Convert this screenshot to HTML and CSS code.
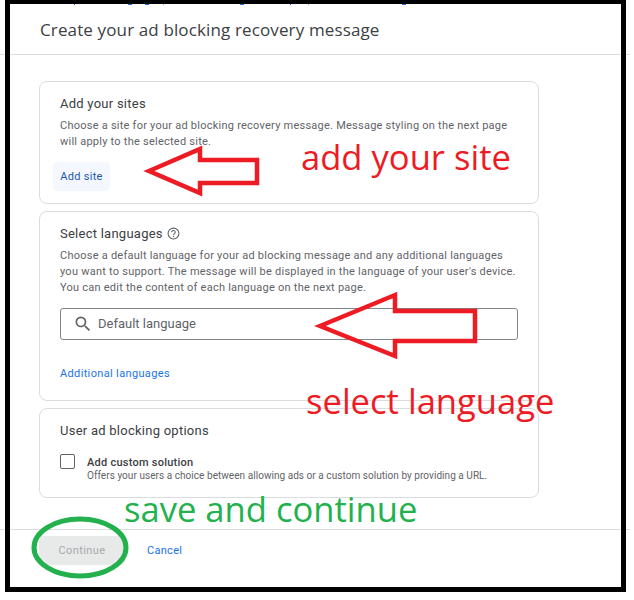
FILE: index.html
```html
<!DOCTYPE html>
<html lang="en">
<head>
    <meta charset="UTF-8">
    <meta name="viewport" content="width=device-width, initial-scale=1.0">
    <title>Create your ad blocking recovery message</title>
    <link rel="stylesheet" href="styles.css">
</head>
<body>
    <div class="page">
        <header class="dialog-head">
            <h1>Create your ad blocking recovery message</h1>
        </header>
        <main class="dialog-body">
            <section class="card card-sites">
                <h2>Add your sites</h2>
                <p>Choose a site for your ad blocking recovery message. Message styling on the next page<br>will apply to the selected site.</p>
                <button class="add-site">Add site</button>
            </section>
            <section class="card card-langs">
                <h2>Select languages
                    <svg class="help" width="13" height="13" viewBox="0 0 24 24" fill="none" stroke="#5f6368" stroke-width="2">
                        <circle cx="12" cy="12" r="10"/>
                        <path d="M8.8 9.6a3.2 3.2 0 1 1 5 2.6c-1.1.8-1.8 1.4-1.8 2.8"/>
                        <path d="M12 16.6v2"/>
                    </svg>
                </h2>
                <p>Choose a default language for your ad blocking message and any additional languages<br>you want to support. The message will be displayed in the language of your user's device.<br>You can edit the content of each language on the next page.</p>
                <div class="search">
                    <svg width="20" height="20" viewBox="0 0 24 24" fill="#5f6368">
                        <path d="M15.5 14h-.79l-.28-.27A6.47 6.47 0 0 0 16 9.5 6.5 6.5 0 1 0 9.5 16c1.61 0 3.09-.59 4.23-1.57l.27.28v.79l5 4.99L20.49 19l-4.99-5zm-6 0C7.01 14 5 11.99 5 9.5S7.01 5 9.5 5 14 7.01 14 9.5 11.99 14 9.5 14z"/>
                    </svg>
                    <span>Default language</span>
                </div>
                <a class="more-langs" href="#">Additional languages</a>
            </section>
            <section class="card card-options">
                <h2>User ad blocking options</h2>
                <div class="option">
                    <span class="checkbox"></span>
                    <div class="option-text">
                        <div class="option-name">Add custom solution</div>
                        <div class="option-note">Offers your users a choice between allowing ads or a custom solution by providing a URL.</div>
                    </div>
                </div>
            </section>
        </main>
        <footer class="dialog-foot">
            <button class="continue" disabled>Continue</button>
            <a class="cancel" href="#">Cancel</a>
        </footer>
    </div>

    <!-- hand drawn notes on top of the screenshot -->
    <div class="shot-frame"></div>
    <svg class="marks" width="634" height="600" viewBox="0 0 634 600" fill="none" stroke-width="4.5">
        <!-- bits of the link row cut off by the frame -->
        <path stroke="#1a73e8" stroke-width="1" d="M74 4.5h1M128 4.5h4M145 4.5h4M240 4.5h4M290 4.5h1M402 4.5h4"/>
        <path stroke="#9aa0a6" stroke-width="1" d="M163 4.5h1M308 4.5h1"/>
        <path stroke="#ed1c24" d="M149 171 200 149V160H257V183H200V193Z"/>
        <path stroke="#ed1c24" d="M320 326 395 295V311H475V341H395V356Z"/>
        <ellipse stroke="#22b14c" stroke-width="5" cx="80" cy="547.5" rx="46" ry="28.5"/>
    </svg>
    <div class="note note-site">add your site</div>
    <div class="note note-lang">select language</div>
    <div class="note note-save">save and continue</div>
</body>
</html>
```

FILE: styles.css
```css
* {
    margin: 0;
    padding: 0;
    box-sizing: border-box;
}
body {
    background-color: #fff;
    font-family: Roboto, "Liberation Sans", sans-serif;
    color: #5f6368;
}
.page {
    width: 630px;
    height: 592px;
    display: flex;
    flex-direction: column;
}
.dialog-head {
    height: 55px;
    padding: 18px 0 0 40px;
    border-bottom: 1px solid #dadce0;
}
.dialog-head h1 {
    font-family: "Open Sans", sans-serif;
    font-size: 17px;
    line-height: 24px;
    font-weight: 400;
    letter-spacing: 0.13px;
    color: #3c4043;
}
.dialog-body {
    height: 474px;
    padding: 26px 0 0 39px;
    display: flex;
    flex-direction: column;
    gap: 7px;
}
.card {
    width: 500px;
    padding: 14px 20px 0;
    border: 1px solid #dadce0;
    border-radius: 8px;
}
.card-sites {
    height: 123px;
}
.card-langs {
    height: 190px;
}
.card-options {
    height: 90px;
}
.card h2 {
    font-size: 13px;
    line-height: 15px;
    font-weight: 400;
    letter-spacing: 0.25px;
    color: #3c4043;
    display: flex;
    align-items: center;
    gap: 4px;
}
.card p {
    margin-top: 7px;
    font-size: 11px;
    line-height: 16px;
    letter-spacing: 0.24px;
}
.add-site {
    display: block;
    margin: 12px 0 0 -7px;
    width: 57px;
    height: 29px;
    font-family: inherit;
    font-size: 11px;
    letter-spacing: 0.3px;
    font-weight: 400;
    color: #1a56b0;
    background-color: #f4f8fe;
    border: none;
    border-radius: 4px;
}
.search {
    margin-top: 12px;
    height: 32px;
    padding: 0 0 1px 12px;
    display: flex;
    align-items: center;
    gap: 5px;
    font-size: 13px;
    border: 1px solid #80868b;
    border-radius: 3px;
}
.more-langs {
    display: block;
    margin-top: 27px;
    font-size: 11px;
    line-height: 14px;
    letter-spacing: 0.35px;
    font-weight: 400;
    color: #1a73e8;
    text-decoration: none;
}
.option {
    margin-top: 16px;
    display: flex;
    gap: 12px;
}
.checkbox {
    width: 15px;
    height: 15px;
    border: 1.5px solid #5f6368;
    border-radius: 2px;
}
.option-text {
    padding-top: 2px;
}
.option-name {
    font-size: 11px;
    line-height: 13px;
    font-weight: 500;
    letter-spacing: 0.25px;
    color: #3c4043;
}
.option-note {
    font-size: 10px;
    line-height: 13px;
    letter-spacing: 0.05px;
}
.dialog-foot {
    flex: 1;
    border-top: 1px solid #dadce0;
    padding: 6px 0 0 39px;
    display: flex;
    align-items: flex-start;
    gap: 22px;
}
.continue {
    width: 86px;
    height: 29px;
    font-family: inherit;
    font-size: 11px;
    letter-spacing: 0.4px;
    color: #a6a9ac;
    background-color: #e8eaea;
    border: none;
    border-radius: 4px;
}
.cancel {
    font-size: 11px;
    line-height: 29px;
    letter-spacing: 0.3px;
    color: #1a73e8;
    text-decoration: none;
}
.shot-frame {
    position: absolute;
    left: 5px;
    top: 0;
    width: 621px;
    height: 592px;
    border: solid #000;
    border-width: 4px 5px 5px;
}
.marks {
    position: absolute;
    left: 0;
    top: 0;
}
.note {
    position: absolute;
    font-family: "Open Sans", "Noto Sans", sans-serif;
    font-size: 34.6px;
    line-height: 44px;
    white-space: nowrap;
    color: #ed1c24;
}
.note-site {
    left: 301px;
    top: 135px;
}
.note-lang {
    left: 306px;
    top: 379px;
}
.note-save {
    left: 124px;
    top: 487px;
    color: #22b14c;
}
```
